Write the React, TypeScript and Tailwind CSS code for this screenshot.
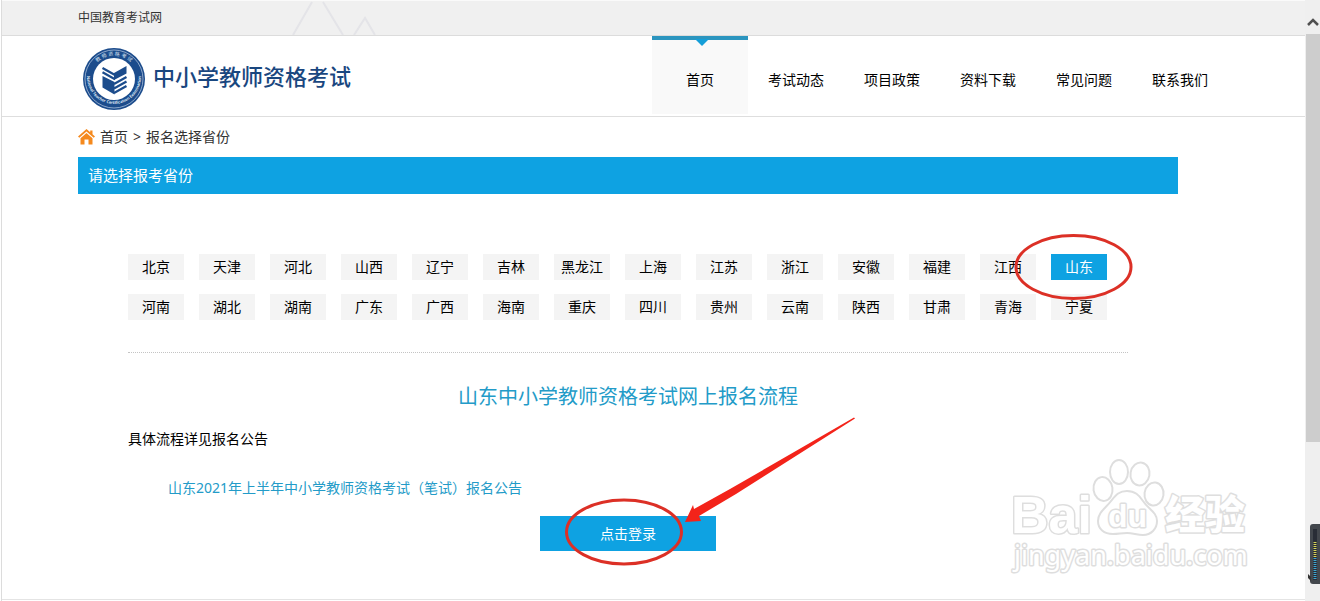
import React from 'react';
import clsx from 'clsx';

const navItems = ['首页', '考试动态', '项目政策', '资料下载', '常见问题', '联系我们'];

const provinces = [
  '北京', '天津', '河北', '山西', '辽宁', '吉林', '黑龙江', '上海', '江苏', '浙江', '安徽', '福建', '江西', '山东',
  '河南', '湖北', '湖南', '广东', '广西', '海南', '重庆', '四川', '贵州', '云南', '陕西', '甘肃', '青海', '宁夏',
];

const selectedProvince = '山东';

const LogoBadge: React.FC = () => (
  <svg width="62" height="62" viewBox="0 0 62 62" aria-hidden="true">
    <defs>
      <path id="ring-top" d="M7.500 31a23.500 23.500 0 0 1 47 0" />
      <path id="ring-bottom" d="M4 29a27 27 0 0 0 54 0" />
    </defs>
    <circle cx="31" cy="31" r="31" fill="#1c4c8c" />
    <circle cx="31" cy="31" r="29" fill="none" stroke="#a9bfdb" strokeWidth="0.8" />
    <circle cx="31" cy="31" r="21" fill="#fff" />
    <text fontSize="5" fill="#dbe5f2" textAnchor="middle">
      <textPath href="#ring-top" startOffset="50%">教 师 资 格 考 试</textPath>
    </text>
    <text fontSize="4" fontWeight="bold" fill="#dbe5f2" textAnchor="middle">
      <textPath href="#ring-bottom" startOffset="50%">National Teacher Certification Examination</textPath>
    </text>
    <g fill="#1c4c8c">
      <path d="M31 25l12.500-7v7.500L31 32z" />
      <path d="M19.500 28l12 6v12.500l-12-7z" />
    </g>
    <g stroke="#1c4c8c" strokeWidth="2.200">
      <path d="M19.500 20L32 27M19.500 24.300L32 31.300" />
      <path d="M31 36l12.500-7M31 40.500l12.500-7M31 45l12.500-7" />
    </g>
  </svg>
);

const HomeIcon: React.FC = () => (
  <svg width="17" height="16" viewBox="0 0 17 16" fill="#f5891d" aria-hidden="true">
    <path d="M8.500 0L0 7.500l1.300 1.300L8.500 2.600l7.200 6.200L17 7.500 14.500 5.300V1.500h-2.300v1.800z" />
    <path d="M8.500 4L2.500 9.200V15.500h4v-5h4v5h4V9.200z" />
  </svg>
);

const TopBar: React.FC = () => (
  <div className="relative flex h-9 items-center border-y border-b-[#dcdcdc] border-t-[#fafafa] bg-[#f0f0f0] pl-[76px]">
    <svg className="absolute left-[288px] top-0" width="90" height="34" fill="none" stroke="#e4e4e8" strokeWidth="2" aria-hidden="true">
      <path d="M3 34L22 1M33 1l20 33M64 34l11-17 10 17" />
    </svg>
    <a href="#" className="relative text-xs text-[#333]">中国教育考试网</a>
  </div>
);

const Header: React.FC = () => (
  <header className="border-b border-[#dedede] pl-[76px]">
    <div className="flex h-20 max-w-[1150px] items-start justify-between">
      <a href="#" className="flex items-start gap-2 pl-[5px] pt-3">
        <LogoBadge />
        <span className="pt-3 text-[22px] font-medium leading-8 text-[#1a477f]">中小学教师资格考试</span>
      </a>
      <nav className="flex">
        {navItems.map((item, index) => (
          <a
            key={item}
            href="#"
            className={clsx(
              'relative h-[78px] w-24 border-t-4 pt-6 text-center text-sm leading-8 text-black',
              index === 0 ? 'border-[#2b95bf] bg-[#f9f9f9]' : 'border-transparent'
            )}
          >
            {index === 0 && (
              <svg className="absolute left-[43px] top-[-1px]" width="14" height="7" aria-hidden="true">
                <path d="M0 0h14L7 7z" fill="#149ed8" />
              </svg>
            )}
            {item}
          </a>
        ))}
      </nav>
    </div>
  </header>
);

const ProvinceList: React.FC = () => (
  <ul className="flex flex-wrap gap-x-[15px] gap-y-[14px] border-b border-dotted border-[#c4c4c4] pb-8">
    {provinces.map((name) => (
      <li key={name} className="relative">
        <a
          href="#"
          className={clsx(
            'block h-[26px] w-14 text-center text-sm leading-[26px]',
            name === selectedProvince ? 'bg-[#0ea2e2] text-white' : 'bg-[#f4f4f4] text-black'
          )}
        >
          {name}
        </a>
        {name === selectedProvince && (
          <svg className="pointer-events-none absolute left-[-37px] top-[-21px] z-10 max-w-none" width="120" height="68" aria-hidden="true">
            <ellipse cx="59.500" cy="34" rx="57.500" ry="31.500" fill="none" stroke="#dc3026" strokeWidth="3" />
          </svg>
        )}
      </li>
    ))}
  </ul>
);

const LoginButton: React.FC = () => (
  <div className="relative mx-auto mt-[18px] w-[176px]">
    <button type="button" className="block h-[35px] w-full bg-[#0ea2e2] text-sm text-white">
      点击登录
    </button>
    <svg className="pointer-events-none absolute left-[24px] top-[-100px] max-w-none" width="292" height="152" aria-hidden="true">
      <ellipse cx="60" cy="116" rx="57.500" ry="32" fill="none" stroke="#dc3026" strokeWidth="3" />
      <path d="M121 106l8-17 1 4 36-20L290 1.500l1 1L172 78l-37 22 2 5z" fill="#f3231a" />
    </svg>
  </div>
);

const Watermark: React.FC = () => (
  <svg
    className="pointer-events-none absolute bottom-[25px] right-[53px]"
    width="242"
    height="120"
    fill="#fff"
    stroke="#dedede"
    strokeWidth="2"
    strokeLinejoin="round"
    aria-hidden="true"
  >
    <ellipse cx="109" cy="16" rx="9" ry="12" />
    <ellipse cx="130" cy="18" rx="9.500" ry="11.500" transform="rotate(10 130 18)" />
    <ellipse cx="93" cy="33" rx="9.500" ry="12" transform="rotate(-8 93 33)" />
    <ellipse cx="144" cy="38" rx="9.500" ry="11.500" transform="rotate(8 144 38)" />
    <path d="M117 35c8 0 12 4 16 10 5 8 14 11 14 20 0 8-6 14-14 14-6 0-10-2-16-2s-8 1-14 1c-9 0-15-5-15-13 0-9 8-13 13-20 5-6 8-10 16-10z" />
    <g style={{ paintOrder: 'stroke' }} strokeWidth="3">
      <text x="1" y="77" className="font-['Liberation_Sans',sans-serif] text-[52px] font-bold">Bai</text>
      <text x="98" y="71" className="font-['Liberation_Sans',sans-serif] text-[32px] font-bold">du</text>
      <text x="155" y="73" className="font-['Noto_Sans_CJK_SC',sans-serif] text-[40px] font-black">经验</text>
      <text x="4" y="109" className="font-['Noto_Sans',sans-serif] text-[27px]">jingyan.baidu.com</text>
    </g>
  </svg>
);

const ScrollTrack: React.FC = () => (
  <aside className="relative w-[15px] shrink-0 bg-[#efefef]" aria-hidden="true">
    <div className="flex h-[34px] items-end justify-center pb-2">
      <svg width="12" height="9" fill="none" stroke="#505050" strokeWidth="2.500">
        <path d="M1 8l5-5 5 5" />
      </svg>
    </div>
    <div className="ml-px h-[408px] bg-[#cdcdcd]" />
    <svg className="absolute bottom-[17px] right-0" width="12" height="60">
      <path d="M2 3q0-3 3-3h7v60H5q-3 0-3-3z" fill="#43474d" />
      <path d="M0 50l3 3v4l-3-3z" fill="#333" />
      <path d="M5 5h4v51H5z" fill="#292d36" />
      <path d="M7 18v16" stroke="#d8d45a" strokeWidth="3" strokeDasharray="1 1" />
      <path d="M7 34v22" stroke="#3fa6cf" strokeWidth="3" strokeDasharray="1 1" />
    </svg>
  </aside>
);

const App: React.FC = () => {
  return (
    <div className="flex min-h-screen bg-white font-['Noto_Sans','Noto_Sans_CJK_SC',sans-serif] text-sm text-black">
      <div className="relative ml-px min-w-0 flex-1 border-l border-[#dcdcdc]">
        <TopBar />
        <Header />

        <main className="border-b border-[#e4e4e4] pb-12 pl-[76px]">
          <div className="max-w-[1100px]">
            {/* Breadcrumb */}
            <div className="flex h-10 items-center gap-[5px] text-[#333]">
              <HomeIcon />
              <a href="#">首页</a>
              <span>&gt;</span>
              <span>报名选择省份</span>
            </div>

            <h1 className="bg-[#0ea2e2] px-[10px] text-[15px] leading-[37px] text-white">请选择报考省份</h1>

            <div className="px-[50px] pt-[60px]">
              <ProvinceList />

              {/* Registration steps */}
              <h2 className="mt-[30px] text-center text-xl text-[#239bc8]">山东中小学教师资格考试网上报名流程</h2>
              <p className="mt-[18px]">具体流程详见报名公告</p>
              <p className="mt-[29px] pl-10">
                <a href="#" className="text-[#239bc8]">山东2021年上半年中小学教师资格考试（笔试）报名公告</a>
              </p>
              <LoginButton />
            </div>
          </div>
        </main>

        <Watermark />
      </div>
      <ScrollTrack />
    </div>
  );
};

export default App;
